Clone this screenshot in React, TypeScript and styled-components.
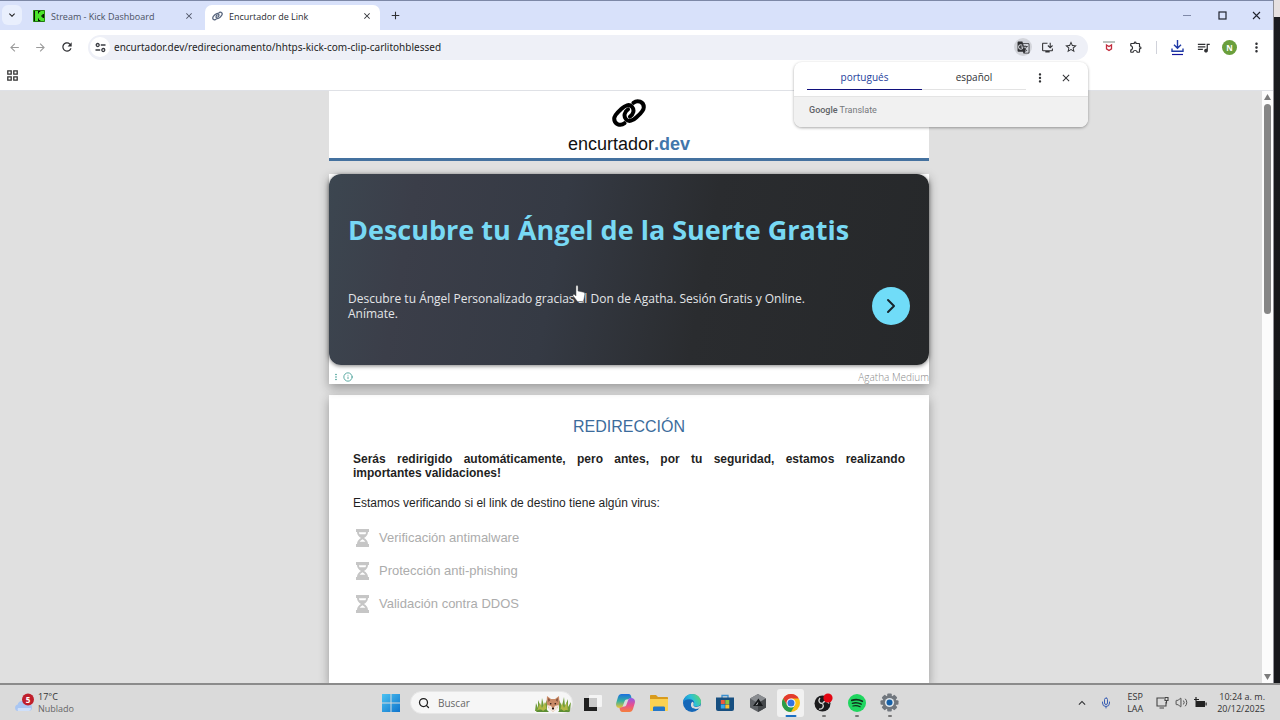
import React from "react";
import styled, { createGlobalStyle, css } from "styled-components";
import {
  MdArrowBack, MdArrowForward, MdRefresh, MdStarBorder, MdOutlineExtension,
  MdMoreVert, MdQueueMusic, MdGTranslate, MdOutlineInstallDesktop, MdClose,
  MdAdd, MdExpandMore, MdOutlineFileDownload, MdKeyboardArrowUp,
} from "react-icons/md";
import { Search, Volume2, Mic, Info, ChevronRight } from "lucide-react";

const ui = `"Open Sans", "Noto Sans", sans-serif`;
const site = `"Liberation Sans", Arial, sans-serif`;

const Global = createGlobalStyle`
  *, *::before, *::after { box-sizing: border-box; }
  body { margin: 0; font-family: ${ui}; color: #1f1f1f; }
  button, input { font: inherit; color: inherit; border: 0; padding: 0; margin: 0; background: none; }
  h1, h2, p, ul { margin: 0; padding: 0; font-weight: inherit; }
  svg { display: block; flex: none; }
`;

const Desktop = styled.div`
  display: flex;
  flex-direction: column;
  height: 100vh;
  background: #17181b;
  overflow: hidden;
`;

const Screen = styled.div`
  flex: 1;
  min-height: 0;
  display: flex;
`;

const Behind = styled.div`
  width: 6px;
  background: linear-gradient(#e6e0e0 17px, #1b1c20 17px, #141517 400px, #000 400px, #000 560px, #17181b 560px);
`;

const Window = styled.div`
  flex: 1;
  min-width: 0;
  display: flex;
  flex-direction: column;
  background: #fff;
  border-top: 1px solid #7d88a6;
  border-right: 1px solid #8f8f96;
`;

const TabStrip = styled.div`
  display: flex;
  align-items: stretch;
  height: 29px;
  padding: 4px 0 0 2px;
  background: #d8e1fa;
`;

const TabMenu = styled.button`
  display: grid;
  place-items: center;
  width: 20px;
  height: 20px;
  border-radius: 6px;
  background: #e9effd;
`;

const Tab = styled.div<{ $active?: boolean }>`
  display: flex;
  align-items: center;
  gap: 6px;
  width: ${(p) => (p.$active ? 175 : 172)}px;
  margin-left: ${(p) => (p.$active ? 0 : 11)}px;
  padding: 0 ${(p) => (p.$active ? 7 : 10)}px 3px ${(p) => (p.$active ? 7 : 0)}px;
  border-radius: 7px 7px 0 0;
  background: ${(p) => (p.$active ? "#fff" : "transparent")};
  font-size: 9px;
  color: ${(p) => (p.$active ? "#2b2d33" : "#4a5062")};
`;

const TabTitle = styled.span`
  flex: 1;
  white-space: nowrap;
`;

const IconButton = styled.button<{ $w?: number; $h?: number; $dim?: boolean }>`
  display: grid;
  place-items: center;
  width: ${(p) => p.$w ?? 26}px;
  height: ${(p) => p.$h ?? 24}px;
  color: ${(p) => (p.$dim ? "#9a9a9a" : "#303134")};
`;

const TabClose = styled.button`
  display: grid;
  place-items: center;
  width: 12px;
  height: 16px;
`;

const NewTab = styled.div`
  flex: 1;
  padding-left: 2px;
`;

const WindowControls = styled.div`
  display: flex;
`;

const Toolbar = styled.div`
  position: relative;
  display: flex;
  align-items: center;
  height: 34px;
  padding: 0 4px 0 1px;
`;

const Omnibox = styled.div`
  flex: 1;
  min-width: 0;
  display: flex;
  align-items: center;
  height: 25px;
  margin: 0 8px 0 7px;
  padding: 0 5px 0 2px;
  border-radius: 13px;
  background: #eef0f7;
`;

const SiteInfo = styled.button`
  display: grid;
  place-items: center;
  width: 20px;
  height: 20px;
  border-radius: 50%;
  background: #fff;
`;

const Url = styled.input`
  flex: 1;
  min-width: 0;
  margin-left: 4px;
  height: 20px;
  font-family: "Noto Sans", sans-serif;
  font-size: 10px;
  outline: 0;
`;

const OmniAction = styled(IconButton)<{ $on?: boolean }>`
  width: ${(p) => (p.$on ? 18 : 24)}px;
  height: 18px;
  border-radius: 50%;
  margin-right: ${(p) => (p.$on ? 3 : 0)}px;
  background: ${(p) => (p.$on ? "#d3d5db" : "transparent")};
`;

const Divider = styled.div`
  width: 1px;
  height: 13px;
  margin: 0 7px 0 6px;
  background: #d0d2da;
`;

const Download = styled(IconButton)`
  color: #1a2fa0;
`;

const Avatar = styled.button`
  width: 15px;
  height: 15px;
  margin: 0 6px;
  border-radius: 50%;
  background: #6a9f3c;
  color: #fff;
  font-size: 8px;
  font-weight: 700;
  line-height: 15px;
  text-align: center;
`;

const Bookmarks = styled.div`
  height: 27px;
  padding: 0 0 0 1px;
  border-bottom: 1px solid #dfe1e6;
`;

const Translate = styled.div`
  position: absolute;
  z-index: 3;
  top: 32px;
  right: 185px;
  width: 294px;
  border-radius: 8px;
  overflow: hidden;
  background: #fff;
  box-shadow: 0 1px 3px rgba(0, 0, 0, 0.35);
`;

const TranslateTabs = styled.div`
  display: flex;
  align-items: flex-start;
  height: 35px;
  padding: 4px 9px 0 13px;
  border-bottom: 1px solid #e4e4e4;
`;

const LangTab = styled.button<{ $on?: boolean }>`
  width: ${(p) => (p.$on ? 115 : 104)}px;
  height: 24px;
  border-bottom: ${(p) => (p.$on ? "1px solid #10107c" : "1px solid #e3e3e3")};
  font-size: 10px;
  line-height: 23px;
  color: ${(p) => (p.$on ? "#24409c" : "#303134")};
`;

const TranslateFoot = styled.div`
  height: 30px;
  padding: 0 15px;
  background: #f1f1f1;
  font-family: Roboto, sans-serif;
  font-size: 9px;
  line-height: 26px;
  color: #75787c;
  b { font-weight: 500; color: #5f6368; }
`;

const Viewport = styled.div`
  flex: 1;
  min-height: 0;
  display: flex;
`;

const Page = styled.div`
  flex: 1;
  min-width: 0;
  display: flex;
  flex-direction: column;
  align-items: center;
  padding-right: 4px;
  overflow: hidden;
  background: #e0e0e0;
  font-family: ${site};
`;

const panel = css`
  width: 100%;
  max-width: 600px;
  background: #fff;
  box-shadow: 0 4px 10px rgba(0, 0, 0, 0.32);
`;

const SiteHeader = styled.header`
  ${panel}
  display: flex;
  flex-direction: column;
  align-items: center;
  height: 70px;
  padding-top: 7px;
  border-bottom: 3px solid #44719f;
  box-shadow: none;
`;

const Brand = styled.a`
  display: flex;
  flex-direction: column;
  align-items: center;
  gap: 6px;
  color: #111;
  font-size: 18px;
  line-height: 20px;
  text-decoration: none;
  b { color: #4276ab; }
`;

const AdFrame = styled.section`
  ${panel}
  position: relative;
  margin: 13px 0 11px;
`;

const AdCard = styled.div`
  height: 191px;
  padding: 35px 19px 0;
  border-radius: 12px;
  background: linear-gradient(100deg, #3c4650 0%, #3b3e49 14%, #353a44 38%, #2a2c2f 62%, #26282a 100%);
  box-shadow: 0 1px 4px rgba(0, 0, 0, 0.5);
  font-family: "Open Sans", sans-serif;
`;

const AdTitle = styled.h1`
  font-size: 27px;
  font-weight: 700;
  line-height: 42px;
  color: #78d9f4;
  white-space: nowrap;
`;

const AdRow = styled.div`
  display: flex;
  align-items: center;
  justify-content: space-between;
  margin-top: 36px;
`;

const AdText = styled.p`
  width: 480px;
  font-size: 12px;
  line-height: 15px;
  color: #e3e5e8;
`;

const AdGo = styled.button`
  display: grid;
  place-items: center;
  width: 38px;
  height: 38px;
  border-radius: 50%;
  background: #70dcf8;
  color: #17252c;
`;

const AdFoot = styled.div`
  display: flex;
  align-items: center;
  gap: 2px;
  height: 19px;
  padding: 5px 0 0 2px;
  color: #3d9a91;
  font-family: "Open Sans", sans-serif;
`;

const Advertiser = styled.span`
  margin-left: auto;
  font-size: 10px;
  font-weight: 300;
  color: #8a8a8a;
`;

const Pointer = styled.svg`
  position: absolute;
  left: 243px;
  top: 111px;
`;

const Card = styled.main`
  ${panel}
  flex: 1;
  padding: 21px 24px 0;
  font-size: 12px;
`;

const CardTitle = styled.h2`
  font-size: 16px;
  line-height: 22px;
  color: #3c6c9c;
  text-align: center;
`;

const Notice = styled.p<{ $strong?: boolean }>`
  margin-top: ${(p) => (p.$strong ? 14 : 16)}px;
  font-weight: ${(p) => (p.$strong ? 700 : 400)};
  line-height: 14px;
  text-align: justify;
`;

const Checks = styled.ul`
  list-style: none;
  margin-top: 11px;
`;

const Check = styled.li`
  display: flex;
  align-items: center;
  gap: 9px;
  height: 33px;
  padding-left: 2px;
  font-size: 13px;
  color: #acacac;
`;

const Scrollbar = styled.div`
  display: flex;
  flex-direction: column;
  align-items: center;
  width: 11px;
  background: #fcfcfc;
`;

const ScrollArrow = styled.button`
  display: grid;
  place-items: center;
  width: 11px;
  height: 12px;
  color: #7c7c7c;
`;

const Track = styled.div`
  flex: 1;
  width: 7px;
`;

const Thumb = styled.div`
  height: 37%;
  margin-top: 1px;
  border-radius: 4px;
  background: #868686;
`;

const Taskbar = styled.footer`
  display: grid;
  grid-template-columns: 1fr auto 1fr;
  height: 37px;
  border-top: 2px solid #8b8b8b;
  background: #dadada;
`;

const Weather = styled.button`
  display: flex;
  align-items: center;
  gap: 4px;
  padding-left: 14px;
  font-size: 9px;
  line-height: 12px;
  text-align: left;
  color: #333;
  span { display: block; color: #666; }
`;

const Apps = styled.div`
  display: flex;
  align-items: center;
`;

const TaskButton = styled.button<{ $open?: boolean; $front?: boolean }>`
  display: grid;
  place-items: center;
  position: relative;
  width: 33px;
  height: 34px;
  &::before {
    content: "";
    position: absolute;
    inset: 3px 3px;
    border-radius: 3px;
    background: ${(p) => (p.$front ? "#f1f1f1" : "transparent")};
  }
  &::after {
    content: "";
    position: absolute;
    bottom: 3px;
    left: 50%;
    width: ${(p) => (p.$front ? 11 : p.$open ? 4 : 0)}px;
    height: 2px;
    border-radius: 1px;
    transform: translateX(-50%);
    background: ${(p) => (p.$front ? "#1b6fc2" : "#777")};
  }
  svg { position: relative; }
`;

const SearchBox = styled.label`
  display: flex;
  align-items: center;
  gap: 8px;
  width: 163px;
  height: 23px;
  margin: 0 3px;
  padding: 0 1px 0 7px;
  border-radius: 12px;
  border: 1px solid #e6e6e6;
  background: #f6f6f6;
  font-size: 10px;
`;

const SearchInput = styled.input`
  flex: 1;
  min-width: 0;
  outline: 0;
  &::placeholder { color: #666; opacity: 1; }
`;

const Tray = styled.div`
  display: flex;
  align-items: center;
  justify-content: flex-end;
  padding-right: 15px;
  font-size: 9px;
  line-height: 12px;
  color: #333;
`;

const Language = styled.button`
  margin: 0 13px 0 9px;
  text-align: center;
`;

const TrayIcons = styled.div`
  display: flex;
  align-items: center;
  gap: 6px;
  margin-right: 10px;
`;

const Clock = styled.time`
  text-align: right;
`;

const LinkIcon = ({ size, color, w = 3 }: { size: number; color: string; w?: number }) => (
  <svg width={size} height={Math.round(size * 0.88)} viewBox="0 0 34 30" fill="none" stroke={color} strokeWidth={w} strokeLinecap="round">
    <path d="M12.500 25.200C8.500 28.500 2.200 26.300 2.200 20.800C2.200 17 6.500 13.500 9.500 10.800C13 7.400 17.200 5.600 20 8.800C22.800 12 21.300 16.500 18 18.600" />
    <path d="M21.500 4.800C25.500 1.500 31.800 3.700 31.800 9.200C31.800 13 27.500 16.500 24.500 19.200C21 22.600 16.800 24.400 14 21.200C11.200 18 12.700 13.500 16 11.400" />
  </svg>
);

const Hourglass = () => (
  <svg width="15" height="18" viewBox="0 0 15 18">
    <path fill="#c6c6c6" d="M1 0h13v3h-1c0 3-1.800 4.600-4 6 2.200 1.400 4 3 4 6h1v3H1v-3h1c0-3 1.800-4.600 4-6C3.800 7.600 2 6 2 3H1z" />
    <path fill="#fff" d="M4 3.200h7c0 .8-.2 1.500-.6 2.100H4.600C4.200 4.700 4 4 4 3.200zM7.500 10.200c1.300.8 2.300 1.600 2.900 2.600H4.600c.6-1 1.600-1.800 2.900-2.600z" />
  </svg>
);

const Kick = () => (
  <svg width="12" height="12" viewBox="0 0 12 12">
    <rect width="12" height="12" fill="#0a1606" />
    <path d="M2 1h3v2.500h1V2h1.300V1H11v3H9.500v1.200H8.300v1.600h1.200V8H11v3H7.300v-1H6V8.500H5V11H2z" fill="#4be62a" />
    <path d="M0 0h12v12H0z" fill="none" stroke="#3fd022" strokeWidth="1.200" />
  </svg>
);

const Tune = () => (
  <svg width="11" height="11" viewBox="0 0 11 11" fill="none" stroke="#3a3c42" strokeWidth="1.300">
    <circle cx="2.700" cy="3" r="1.500" /><path d="M5.800 3H10.500M.5 8H5.200" /><circle cx="8.300" cy="8" r="1.500" />
  </svg>
);

const Shield = () => (
  <svg width="12" height="12" viewBox="0 0 12 12">
    <path d="M0 1h12" stroke="#8d9a92" strokeWidth="1.200" />
    <path d="M3.500 4l2.500 1.500L8.500 4v3.800L6 9.500 3.500 7.800z" fill="#fff" stroke="#c22b3c" strokeWidth="1.300" />
  </svg>
);

const Grid = () => (
  <svg width="11" height="11" viewBox="0 0 11 11" fill="none" stroke="#333" strokeWidth="1.300">
    <path d="M.8.800h3.400v3.400H.8zM6.800.800h3.400v3.400H6.800zM.8 6.800h3.400v3.400H.8zM6.800 6.800h3.400v3.400H6.800z" />
  </svg>
);

const DownloadIcon = () => (
  <svg width="13" height="18" viewBox="0 0 13 18" fill="none" stroke="#1f3aa6" strokeWidth="1.400">
    <path d="M6.500 2v8M3 6.800l3.500 3.500L10 6.800M1 10.500v2.800h11v-2.800" />
    <path d="M1 16.500h11" stroke="#14149a" strokeWidth="1.200" />
  </svg>
);

const Cloud = () => (
  <svg width="20" height="20" viewBox="0 0 20 20">
    <path d="M4 18a3.300 3.300 0 0 1-.3-6.500 5 5 0 0 1 9.300-1.200A3.900 3.900 0 0 1 15 18z" fill="#a9c6f2" />
    <path d="M4 18a3 3 0 0 1 0-3h13a3 3 0 0 1-2 3z" fill="#cfe0fa" />
    <circle cx="14" cy="6.500" r="6" fill="#c01f2c" />
    <text x="14" y="9.500" fontSize="8" fontWeight="700" textAnchor="middle" fill="#fff">5</text>
  </svg>
);

const Start = () => (
  <svg width="18" height="18" viewBox="0 0 18 18">
    <defs><linearGradient id="st" x1="0" y1="0" x2="1" y2="1"><stop stopColor="#4cc3f2" /><stop offset="1" stopColor="#0f74cc" /></linearGradient></defs>
    <path fill="url(#st)" d="M0 0h8.500v8.500H0zM9.500 0H18v8.500H9.500zM0 9.500h8.500V18H0zM9.500 9.500H18V18H9.500z" />
  </svg>
);

const Fox = () => (
  <svg width="36" height="18" viewBox="0 0 36 18">
    <path fill="#6f9c3a" d="M0 17 L1 9 3 14 3 6 6 13 7 4 9 12 12 6 12 17zM24 17 L24 6 27 12 29 3 30 12 33 5 33 13 36 8 35 17z" />
    <path fill="#b2b846" d="M2 17L5 9 7 14 10 8 12 17zM25 17l2-8 2 5 3-6 1 9z" />
    <path fill="#c98a66" d="M12 2l4 3h4l4-3 .5 7-2 5-4.500 4-4.500-4-2-5z" />
    <path fill="#7b4a38" d="M13 4l2.200 2-1.700 2zM23 4l-2.200 2 1.700 2z" />
    <path fill="#f3e6da" d="M12.500 11l3.500 1 2 3 2-3 3.500-1-1.500 4-4 3-4-3z" />
    <circle cx="15.700" cy="9.800" r=".8" fill="#26150f" /><circle cx="20.300" cy="9.800" r=".8" fill="#26150f" /><circle cx="18" cy="14.600" r="1.100" fill="#26150f" />
    <path fill="#5c8d33" d="M1 18c2-3 5-3 7-1l3-2 3 3zM23 18l3-3 3 2c2-2 5-1 6 1z" />
  </svg>
);

const TaskView = () => (
  <svg width="18" height="18" viewBox="0 0 18 18">
    <rect x="5" y="1" width="13" height="12" rx="1" fill="#f4f4f4" />
    <path d="M0 4h5v9h8v4H0z" fill="#1f1f1f" /><path d="M5 4h8v9H5z" fill="#c9c9c9" />
  </svg>
);

const Copilot = () => (
  <svg width="19" height="18" viewBox="0 0 19 18">
    <defs>
      <linearGradient id="c1" x1="0" y1="0" x2="0" y2="1"><stop stopColor="#1b6fe0" /><stop offset=".5" stopColor="#35b0a0" /><stop offset="1" stopColor="#f2c230" /></linearGradient>
      <linearGradient id="c2" x1="0" y1="0" x2="0" y2="1"><stop stopColor="#8f5be8" /><stop offset=".5" stopColor="#e84f8f" /><stop offset="1" stopColor="#f5803c" /></linearGradient>
    </defs>
    <path fill="url(#c1)" d="M5.500 0h7c2 0 2.500 1.500 3 4L11 5.500C9.500 5.500 9 6 8.500 7.500L6.800 12c-.5 1.500-1 2-2.800 2-3 0-4.500-1.800-3.800-5L2 3C2.600 1 3.800 0 5.500 0z" />
    <path fill="url(#c2)" d="M13.500 18h-7c-2 0-2.500-1.500-3-4L8 12.500c1.500 0 2-.5 2.500-2L12.200 6c.5-1.500 1-2 2.800-2 3 0 4.500 1.800 3.800 5L17 15c-.6 2-1.800 3-3.500 3z" />
  </svg>
);

const Folder = () => (
  <svg width="20" height="18" viewBox="0 0 20 18">
    <path fill="#d99b1c" d="M1 2c0-.6.4-1 1-1h5l2 2h9c.6 0 1 .4 1 1v5H1z" />
    <path fill="#fbd152" d="M1 5h18v11c0 .6-.4 1-1 1H2c-.6 0-1-.4-1-1z" />
    <path fill="#2577c8" d="M4 17v-3c0-1 .5-1.500 1.500-1.500h9c1 0 1.500.5 1.500 1.500v3z" />
  </svg>
);

const Edge = () => (
  <svg width="18" height="18" viewBox="0 0 18 18">
    <defs><linearGradient id="ed" x1="0" y1="0.600" x2="1" y2="0.200"><stop stopColor="#1584d6" /><stop offset=".5" stopColor="#2cc0d8" /><stop offset="1" stopColor="#5fd86a" /></linearGradient></defs>
    <circle cx="9" cy="9" r="9" fill="#1467b8" />
    <path fill="url(#ed)" d="M0 9C0 4 4 0 9 0s9 3.500 9 8c0 3-2.300 4.600-5 4.600-2.200 0-3-1-2.600-1.800C11 10 11.200 9.300 11.200 8.600 11 6.500 9 5.300 6.500 5.300 3 5.300.5 7 0 9z" />
    <path fill="#dadada" d="M10.500 10.500c-.6 1 .3 2.400 2.700 2.400 1.600 0 3-.5 4.300-1.300l-1.200 2.600c-4 1.800-9 .3-8.300-4.200.1-1 .8-1.800 1.600-2.200.9.300 1.400 1.600.9 2.700z" />
  </svg>
);

const Store = () => (
  <svg width="18" height="18" viewBox="0 0 18 18">
    <path d="M6 4V1.500h6V4" fill="none" stroke="#3a8fd0" strokeWidth="1.300" />
    <path d="M0 3.500h18V15a2 2 0 0 1-2 2H2a2 2 0 0 1-2-2z" fill="#174f80" />
    <path fill="#ef5a3c" d="M4.800 6h4v4h-4z" /><path fill="#8ac43f" d="M9.300 6h4v4h-4z" /><path fill="#37a8e8" d="M4.800 10.500h4v4h-4z" /><path fill="#fbc22e" d="M9.300 10.500h4v4h-4z" />
  </svg>
);

const Cube = () => (
  <svg width="16" height="18" viewBox="0 0 16 18">
    <path d="M8 0l8 4.500v9L8 18l-8-4.500v-9z" fill="#606367" />
    <path d="M8 0l8 4.500L8 9 0 4.500z" fill="#8a8d91" /><path d="M8 9l8-4.500v9L8 18z" fill="#45484b" />
    <path d="M8.500 4.500L13 12H3z" fill="#16181a" /><path d="M8.500 7.500l-3 4 2-1z" fill="#d2d4d6" />
  </svg>
);

const Chrome = () => (
  <svg width="18" height="18" viewBox="0 0 18 18">
    <circle cx="9" cy="9" r="9" fill="#fbc116" />
    <path fill="#e33b2e" d="M1.200 4.500A9 9 0 0 1 16.800 4.500H9L5.100 11.200z" />
    <path fill="#2a9d4a" d="M1.200 4.500A9 9 0 0 0 9 18l3.900-6.700H5.100z" />
    <circle cx="9" cy="9" r="4.500" fill="#fff" /><circle cx="9" cy="9" r="3.500" fill="#3474e0" />
  </svg>
);

const Obs = () => (
  <svg width="19" height="19" viewBox="0 0 19 19">
    <circle cx="8.500" cy="10.500" r="8" fill="#1b1b1d" />
    <g fill="none" stroke="#d4d4d4" strokeWidth="1.300">
      <path d="M8.500 10.500C5 10.500 4 7.500 6 5" /><path d="M8.500 10.500c1.500-3 5-3 6.500 0" /><path d="M8.500 10.500c2 3 0 6-3.500 5.500" />
    </g>
    <circle cx="14" cy="5" r="4.600" fill="#e30613" />
  </svg>
);

const Spotify = () => (
  <svg width="18" height="18" viewBox="0 0 18 18">
    <circle cx="9" cy="9" r="9" fill="#1fd65f" />
    <g fill="none" stroke="#10301b" strokeLinecap="round"><path d="M3.800 6.400c3.500-1.100 7.500-.7 10.500.9" strokeWidth="1.700" /><path d="M4.400 9.300c3-.9 6.200-.5 8.800.9" strokeWidth="1.400" /><path d="M4.900 12c2.500-.7 5-.4 7.200.8" strokeWidth="1.200" /></g>
  </svg>
);

const Gear = () => (
  <svg width="19" height="19" viewBox="0 0 19 19">
    <g fill="#71777e">
      {[0, 45, 90, 135].map((a) => <rect key={a} x="7.200" y="0.500" width="4.600" height="18" rx="1" transform={`rotate(${a} 9.500 9.500)`} />)}
      <circle cx="9.500" cy="9.500" r="7" />
    </g>
    <circle cx="9.500" cy="9.500" r="4.600" fill="#dfe5ea" /><circle cx="9.500" cy="9.500" r="3" fill="#1560a8" />
  </svg>
);

const Network = () => (
  <svg width="13" height="13" viewBox="0 0 13 13" fill="none" stroke="#444" strokeWidth="1.100">
    <path d="M8 2H1v8h9V6M3.500 12h4.500M9 1.500h3v3H9zM10.500 4.500v3" />
  </svg>
);

const Battery = () => (
  <svg width="13" height="12" viewBox="0 0 13 12">
    <path d="M1.500 4h9.500v6H1.500zM11.500 5.500h1.200v3h-1.200z" fill="#222" /><path d="M2 0v4M0 2.500h5" stroke="#222" strokeWidth="1.200" />
  </svg>
);

const checks = ["Verificación antimalware", "Protección anti-phishing", "Validación contra DDOS"];

const apps: { name: string; icon: React.ReactNode; open?: boolean; front?: boolean }[] = [
  { name: "Vista de tareas", icon: <TaskView /> },
  { name: "Copilot", icon: <Copilot /> },
  { name: "Explorador", icon: <Folder /> },
  { name: "Edge", icon: <Edge /> },
  { name: "Store", icon: <Store /> },
  { name: "Cubo", icon: <Cube /> },
  { name: "Chrome", icon: <Chrome />, front: true },
  { name: "OBS", icon: <Obs />, open: true },
  { name: "Spotify", icon: <Spotify />, open: true },
  { name: "Configuración", icon: <Gear />, open: true },
];

export default function App() {
  return (
    <Desktop>
      <Global />
      <Screen>
        <Window>
          <TabStrip>
            <TabMenu aria-label="Buscar pestañas"><MdExpandMore size={12} /></TabMenu>
            <Tab>
              <Kick />
              <TabTitle>Stream - Kick Dashboard</TabTitle>
              <TabClose aria-label="Cerrar pestaña"><MdClose size={10} /></TabClose>
            </Tab>
            <Tab $active>
              <LinkIcon size={11} color="#56647c" w={4} />
              <TabTitle>Encurtador de Link</TabTitle>
              <TabClose aria-label="Cerrar pestaña"><MdClose size={10} /></TabClose>
            </Tab>
            <NewTab><IconButton $h={20} aria-label="Nueva pestaña"><MdAdd size={13} /></IconButton></NewTab>
            <WindowControls>
              <IconButton $w={35} $h={21} $dim aria-label="Minimizar"><svg width="9" height="9" viewBox="0 0 9 9"><path d="M0 4.500h8" stroke="#7f89a8" /></svg></IconButton>
              <IconButton $w={35} $h={21} aria-label="Maximizar"><svg width="9" height="9" viewBox="0 0 9 9"><rect x="1" y="1" width="7" height="7" fill="none" stroke="#20242e" strokeWidth="1.200" /></svg></IconButton>
              <IconButton $w={33} $h={21} aria-label="Cerrar"><svg width="9" height="9" viewBox="0 0 9 9"><path d="M1 1l7 7M8 1L1 8" stroke="#20242e" strokeWidth="1.100" /></svg></IconButton>
            </WindowControls>
          </TabStrip>

          <Toolbar>
            <IconButton $dim aria-label="Atrás"><MdArrowBack size={13} /></IconButton>
            <IconButton $dim aria-label="Adelante"><MdArrowForward size={13} /></IconButton>
            <IconButton $w={28} aria-label="Recargar"><MdRefresh size={14} /></IconButton>
            <Omnibox>
              <SiteInfo aria-label="Información del sitio"><Tune /></SiteInfo>
              <Url aria-label="Dirección" defaultValue="encurtador.dev/redirecionamento/hhtps-kick-com-clip-carlitohblessed" />
              <OmniAction $on aria-label="Traducir"><MdGTranslate size={13} /></OmniAction>
              <OmniAction aria-label="Instalar"><MdOutlineInstallDesktop size={13} /></OmniAction>
              <OmniAction aria-label="Favorito"><MdStarBorder size={14} /></OmniAction>
            </Omnibox>
            <IconButton aria-label="Protección"><Shield /></IconButton>
            <IconButton $w={28} aria-label="Extensiones"><MdOutlineExtension size={14} /></IconButton>
            <Divider />
            <Download aria-label="Descargas"><DownloadIcon /></Download>
            <IconButton aria-label="Multimedia"><MdQueueMusic size={15} /></IconButton>
            <Avatar aria-label="Perfil">N</Avatar>
            <IconButton aria-label="Menú"><MdMoreVert size={15} /></IconButton>

            <Translate>
              <TranslateTabs>
                <LangTab $on>portugués</LangTab>
                <LangTab>español</LangTab>
                <IconButton $w={28} aria-label="Opciones"><MdMoreVert size={14} /></IconButton>
                <IconButton $w={24} aria-label="Cerrar traductor"><MdClose size={12} /></IconButton>
              </TranslateTabs>
              <TranslateFoot><b>Google</b> Translate</TranslateFoot>
            </Translate>
          </Toolbar>

          <Bookmarks><IconButton $w={22} $h={22} aria-label="Aplicaciones"><Grid /></IconButton></Bookmarks>

          <Viewport>
            <Page>
              <SiteHeader>
                <Brand href="#">
                  <LinkIcon size={34} color="#000" w={4} />
                  <span>encurtador<b>.dev</b></span>
                </Brand>
              </SiteHeader>

              <AdFrame>
                <AdCard>
                  <AdTitle>Descubre tu Ángel de la Suerte Gratis</AdTitle>
                  <AdRow>
                    <AdText>Descubre tu Ángel Personalizado gracias al Don de Agatha. Sesión Gratis y Online. Anímate.</AdText>
                    <AdGo aria-label="Abrir"><ChevronRight size={24} strokeWidth={2} /></AdGo>
                  </AdRow>
                </AdCard>
                <AdFoot>
                  <MdMoreVert size={10} />
                  <Info size={10} />
                  <Advertiser>Agatha Medium</Advertiser>
                </AdFoot>
                <Pointer width="14" height="18" viewBox="0 0 14 18">
                  <path d="M4 1.500c0-1.300 2-1.300 2 0V6l5.500 1.200c1 .3 1.500 1 1.400 2L12 14l-1 2.500H5.500L1.200 11c-.8-1.200.5-2 1.400-1.300L4 11z" fill="#fff" stroke="#555" strokeWidth=".500" />
                </Pointer>
              </AdFrame>

              <Card>
                <CardTitle>REDIRECCIÓN</CardTitle>
                <Notice $strong>Serás redirigido automáticamente, pero antes, por tu seguridad, estamos realizando importantes validaciones!</Notice>
                <Notice>Estamos verificando si el link de destino tiene algún virus:</Notice>
                <Checks>
                  {checks.map((c) => <Check key={c}><Hourglass />{c}</Check>)}
                </Checks>
              </Card>
            </Page>
            <Scrollbar>
              <ScrollArrow aria-label="Subir"><svg width="7" height="6" viewBox="0 0 7 6"><path d="M3.500 0L7 6H0z" fill="currentColor" /></svg></ScrollArrow>
              <Track><Thumb /></Track>
              <ScrollArrow aria-label="Bajar"><svg width="7" height="6" viewBox="0 0 7 6"><path d="M3.500 6L7 0H0z" fill="currentColor" /></svg></ScrollArrow>
            </Scrollbar>
          </Viewport>
        </Window>
        <Behind />
      </Screen>

      <Taskbar>
        <Weather><Cloud /><div>17°C<span>Nublado</span></div></Weather>
        <Apps>
          <TaskButton aria-label="Inicio"><Start /></TaskButton>
          <SearchBox>
            <Search size={12} strokeWidth={2.500} />
            <SearchInput placeholder="Buscar" aria-label="Buscar" />
            <Fox />
          </SearchBox>
          {apps.map((a) => (
            <TaskButton key={a.name} aria-label={a.name} $open={a.open} $front={a.front}>{a.icon}</TaskButton>
          ))}
        </Apps>
        <Tray>
          <IconButton $w={24} aria-label="Iconos ocultos"><MdKeyboardArrowUp size={14} /></IconButton>
          <IconButton $w={24} aria-label="Micrófono"><Mic size={12} color="#3a5fb4" /></IconButton>
          <Language>ESP<br />LAA</Language>
          <TrayIcons><Network /><Volume2 size={13} strokeWidth={1.500} /><Battery /></TrayIcons>
          <Clock>10:24 a. m.<br />20/12/2025</Clock>
        </Tray>
      </Taskbar>
    </Desktop>
  );
}
